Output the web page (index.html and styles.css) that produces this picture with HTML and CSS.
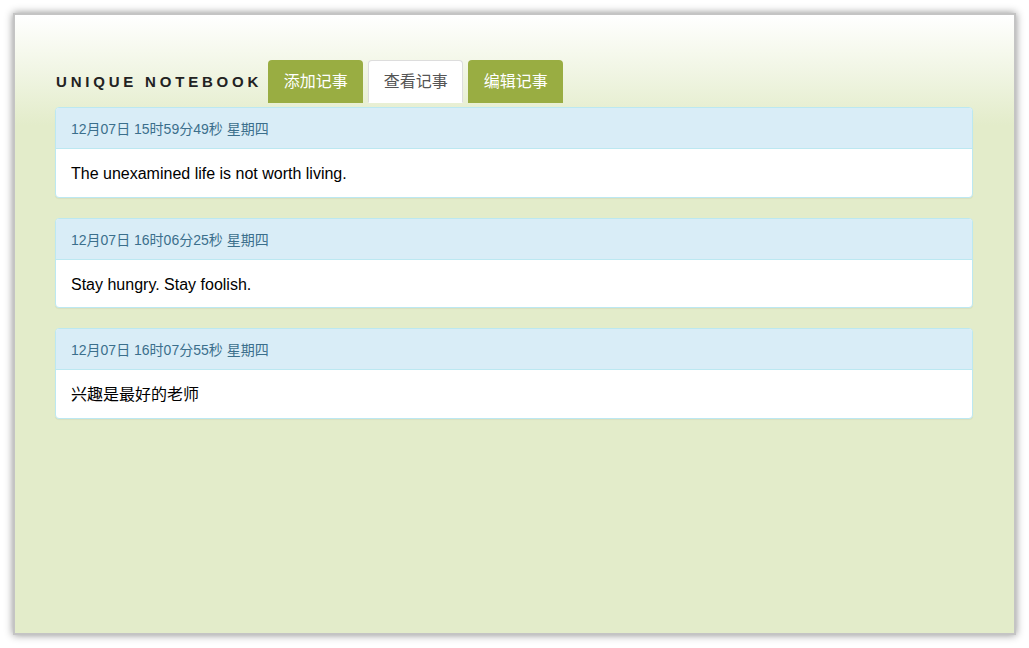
FILE: index.html
```html
<!DOCTYPE html>
<html lang="zh">
<head>
<meta charset="utf-8">
<title>Unique Notebook</title>
<link rel="stylesheet" href="styles.css">
</head>
<body>
<div class="frame">
  <div class="header">
    <h1 class="brand">UNIQUE NOTEBOOK</h1>
    <ul class="tabs">
      <li class="tab">添加记事</li>
      <li class="tab active">查看记事</li>
      <li class="tab">编辑记事</li>
    </ul>
  </div>
  <div class="notes">
    <div class="panel">
      <div class="panel-heading">12月07日 15时59分49秒 星期四</div>
      <div class="panel-body">The unexamined life is not worth living.</div>
    </div>
    <div class="panel">
      <div class="panel-heading">12月07日 16时06分25秒 星期四</div>
      <div class="panel-body">Stay hungry. Stay foolish.</div>
    </div>
    <div class="panel">
      <div class="panel-heading">12月07日 16时07分55秒 星期四</div>
      <div class="panel-body">兴趣是最好的老师</div>
    </div>
  </div>
</div>
</body>
</html>
```
FILE: styles.css
```css
html, body {
  margin: 0;
  padding: 0;
  background: #ffffff;
}
body {
  padding: 13px;
  font-family: "Liberation Sans", Arial, "Noto Sans CJK SC", sans-serif;
  font-size: 14px;
  color: #333;
}
.frame {
  box-sizing: border-box;
  width: 1003px;
  height: 622px;
  border: 2px solid #c4c4c4;
  box-shadow: 0 0 8px rgba(0, 0, 0, 0.45);
  background: linear-gradient(to bottom, #ffffff 0px, #e3ecca 110px, #e3ecca 100%);
  padding: 45px 41px 0 40px;
}
.header {
  display: flex;
  align-items: flex-end;
}
.brand {
  margin: 0 6px 0 1px;
  padding-bottom: 13px;
  font-size: 15px;
  font-weight: 900;
  letter-spacing: 3.8px;
  line-height: 17px;
  color: #222222;
  white-space: nowrap;
}
.tabs {
  list-style: none;
  margin: 0;
  padding: 0;
  display: flex;
  gap: 5px;
}
.tab {
  box-sizing: border-box;
  height: 43px;
  width: 95px;
  padding: 0;
  line-height: 43px;
  font-size: 16px;
  color: #ffffff;
  background: #99ad42;
  border-radius: 4px 4px 0 0;
  text-align: center;
  white-space: nowrap;
}
.tab.active {
  background: #ffffff;
  color: #555555;
  border: 1px solid #dddddd;
  border-bottom-color: transparent;
  line-height: 41px;
}
.notes {
  margin-top: 4px;
}
.panel {
  background: #ffffff;
  border: 1px solid #bce8f1;
  border-radius: 4px;
  margin-bottom: 20px;
  box-shadow: 0 1px 1px rgba(0, 0, 0, 0.05);
}
.panel-heading {
  background: #d9edf7;
  color: #3b6f8c;
  border-bottom: 1px solid #bce8f1;
  border-radius: 3px 3px 0 0;
  padding: 11px 15px 9px;
  line-height: 20px;
  font-size: 14px;
}
.panel-body {
  padding: 16px 15px 14px;
  font-size: 16px;
  line-height: 17.5px;
  color: #000000;
}
```
